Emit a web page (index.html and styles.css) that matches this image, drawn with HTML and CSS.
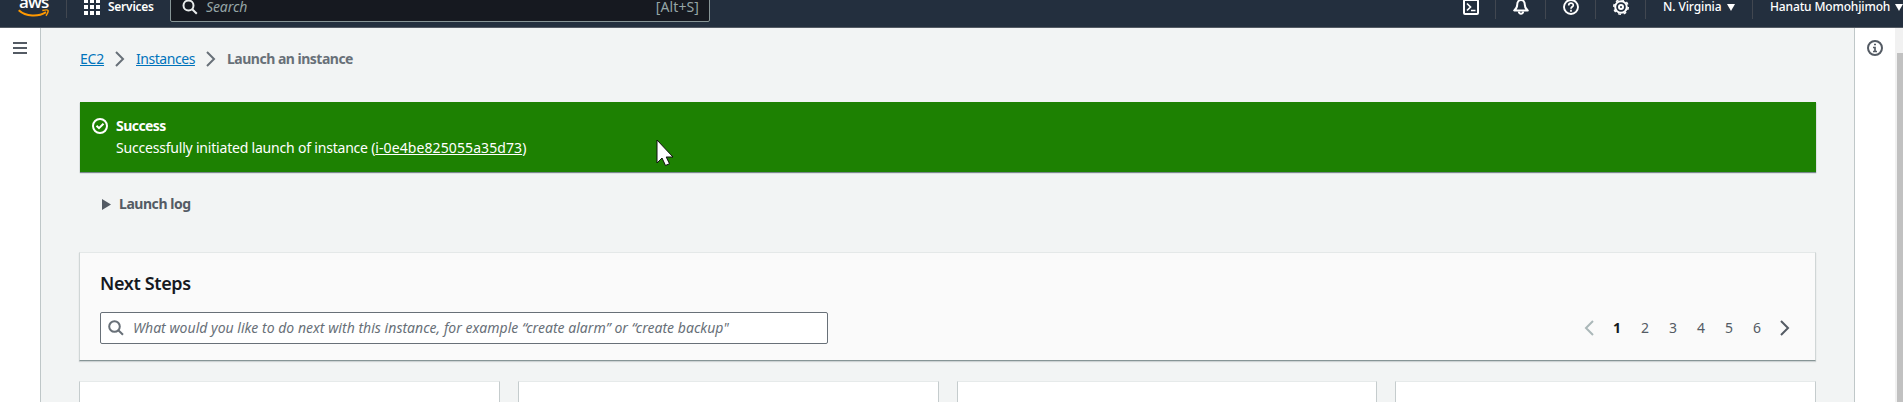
FILE: index.html
```html
<!DOCTYPE html>
<html lang="en">
<head>
<meta charset="utf-8">
<title>Launch an instance | EC2</title>
<link rel="stylesheet" href="styles.css">
</head>
<body>
<header class="topbar">
  <div class="brand">
    <span class="brand-name">aws</span>
    <svg class="smile" width="32" height="9" viewBox="0 0 32 9" fill="none" stroke="#ff9900" stroke-width="2"><path d="M.7 1.200C8 7.700 20 8.300 28 3.200"/><path d="M24.300 1.500c2.800-.7 5.400-.8 5.700 0s-.5 3.300-2 5.300" stroke-width="1.500"/></svg>
  </div>
  <button class="services"><svg width="16" height="16" viewBox="0 0 16 16" fill="#fff"><path d="M0 0h4v4H0zM6 0h4v4H6zM12 0h4v4h-4zM0 6h4v4H0zM6 6h4v4H6zM12 6h4v4h-4zM0 12h4v4H0zM6 12h4v4H6zM12 12h4v4h-4z"/></svg><span>Services</span></button>
  <div class="search">
    <svg width="16" height="16" viewBox="0 0 16 16" fill="none" stroke="#eaeded" stroke-width="2"><circle cx="6.500" cy="6.500" r="5"/><path d="M10.200 10.200l4.600 4.600"/></svg>
    <span class="search-hint">Search</span><span class="shortcut">[Alt+S]</span>
  </div>
  <nav class="tools">
    <span class="tool"><svg width="16" height="16" viewBox="0 0 16 16" fill="none" stroke="#fff" stroke-width="2"><rect x="1" y="1" width="14" height="14" rx="1"/><path d="M4 4.500l3.500 3.500L4 11.500M8 11.500h4.500" stroke-width="1.700"/></svg></span>
    <span class="tool"><svg width="16" height="16" viewBox="0 0 16 16" fill="none" stroke="#fff" stroke-width="2" stroke-linejoin="round"><path d="M1.200 11.500h13.600c-2-1.500-3-3-3-5.700C11.800 3 10.200 1 8 1S4.200 3 4.200 5.800c0 2.700-1 4.200-3 5.700z"/><path d="M5.800 12.500c.3 3 4.100 3 4.400 0"/></svg></span>
    <span class="tool"><svg width="16" height="16" viewBox="0 0 16 16" fill="none" stroke="#fff" stroke-width="1.900"><circle cx="8" cy="8" r="7"/><path d="M5.700 6.400C5.700 3.400 10.300 3.500 10.300 6.200 10.300 7.800 8 7.800 8 9.700M8 10.800v1.900" stroke-width="1.700"/></svg></span>
    <span class="tool"><svg width="16" height="16" viewBox="0 0 16 16" fill="none" stroke="#fff"><circle cx="8" cy="8" r="5.800" stroke-width="2"/><circle cx="8" cy="8" r="7.200" stroke-width="1.600" stroke-dasharray="2.827 2.827"/><circle cx="8" cy="8" r="2" stroke-width="2"/></svg></span>
    <span class="menu region"><span>N. Virginia</span><i class="caret"></i></span>
    <span class="menu account"><span>Hanatu Momohjimoh</span><i class="caret"></i></span>
  </nav>
</header>
<div class="layout">
  <aside class="side left"><svg width="14" height="12" viewBox="0 0 14 12" fill="#545b64"><path d="M0 0h14v2H0zM0 5h14v2H0zM0 10h14v2H0z"/></svg></aside>
  <main class="content">
    <nav class="crumbs">
      <a class="crumb-root" href="#">EC2</a>
      <svg width="10" height="16" viewBox="0 0 10 16" fill="none" stroke="#687078" stroke-width="2"><path d="M1 1l7 7-7 7"/></svg>
      <a class="crumb-list" href="#">Instances</a>
      <svg width="10" height="16" viewBox="0 0 10 16" fill="none" stroke="#687078" stroke-width="2"><path d="M1 1l7 7-7 7"/></svg>
      <span class="current">Launch an instance</span>
    </nav>
    <section class="flash">
      <svg width="16" height="16" viewBox="0 0 16 16" fill="none" stroke="#fff" stroke-width="2"><circle cx="8" cy="8" r="7"/><path d="M4.500 7.700L7 10.200l4.500-4.500"/></svg>
      <div class="flash-text"><div class="flash-title">Success</div><div class="flash-body">Successfully initiated launch of instance (<a href="#">i-0e4be825055a35d73</a>)</div></div>
    </section>
    <div class="log"><svg width="9" height="11" viewBox="0 0 9 11" fill="#545b64"><path d="M0 0l9 5.500L0 11z"/></svg><span>Launch log</span></div>
    <section class="panel">
      <h2>Next Steps</h2>
      <div class="panel-row">
        <div class="filter"><svg width="16" height="16" viewBox="0 0 16 16" fill="none" stroke="#687078" stroke-width="2"><circle cx="6.500" cy="6.500" r="5.300"/><path d="M10.300 10.300l4.700 4.500"/></svg><span>What would you like to do next with this instance, for example “create alarm” or “create backup"</span></div>
        <div class="pages">
          <span><svg width="10" height="16" viewBox="0 0 10 16" fill="none" stroke="#aab7b8" stroke-width="2"><path d="M9 1L2 8l7 7"/></svg></span>
          <span class="active">1</span><span>2</span><span>3</span><span>4</span><span>5</span><span>6</span>
          <span><svg width="10" height="16" viewBox="0 0 10 16" fill="none" stroke="#545b64" stroke-width="2"><path d="M1 1l7 7-7 7"/></svg></span>
        </div>
      </div>
    </section>
    <div class="cards"><article></article><article></article><article></article><article></article></div>
  </main>
  <aside class="side right"><svg width="16" height="16" viewBox="0 0 16 16" fill="none" stroke="#545b64" stroke-width="2"><circle cx="8" cy="8" r="7"/><path d="M7 4.500h2M6 7.500h2v4M6 11.500h4" stroke-width="1.700"/></svg></aside>
  <div class="scrollbar"><div class="thumb"></div></div>
</div>
<svg class="pointer" width="19" height="28" viewBox="0 0 19 28" fill="#fff" stroke="#111"><path d="M1 1v23l5-5 3.500 7.500 4-1.800L10.200 18H17z"/></svg>
</body>
</html>
```
FILE: styles.css
```css
* { box-sizing: border-box; }
body { margin: 0; height: 402px; overflow: hidden; background: #f2f4f4; color: #16191f; font: 14px/22px "Noto Sans", "Open Sans", sans-serif; }
svg { display: block; flex: none; }
span, a { white-space: nowrap; }

.topbar { display: flex; align-items: center; height: 41px; margin-top: -13px; background: #232f3e; border-bottom: 1px solid #545b64; color: #fff; font-size: 12px; }
.brand { width: 67px; height: 23px; padding-left: 18px; border-right: 1px solid #414750; margin-top: -1px; }
.brand-name { display: block; font: 600 17px/18px "Open Sans", sans-serif; letter-spacing: -.8px; margin: -2px 0 0 1px; height: 16px; }
.services { display: flex; align-items: center; gap: 8px; width: 103px; padding: 0 0 0 17px; border: 0; background: none; color: #fff; font: 600 12px/16px "Noto Sans", sans-serif; letter-spacing: -.25px; }
.search { display: flex; align-items: center; width: 540px; height: 30px; padding: 0 10px 0 11px; border: 1px solid #879596; border-radius: 2px; background: #161920; color: #95a5a6; font-size: 14px; }
.search-hint { flex: 1; margin-left: 8px; font-style: italic; letter-spacing: -.1px; }
.shortcut { letter-spacing: .1px; }
.tools { display: flex; align-items: center; margin-left: auto; height: 23px; font-weight: 500; }
.tool { display: flex; align-items: center; justify-content: center; width: 50px; height: 23px; border-right: 1px solid #414750; }
.menu { display: flex; align-items: center; gap: 6px; height: 23px; padding-left: 17px; letter-spacing: -.1px; }
.region { width: 107px; border-right: 1px solid #414750; }
.account { width: 150px; letter-spacing: -.15px; }
.account .caret { margin-left: -1px; }
.caret { flex: none; border: 4px solid transparent; border-top: 7px solid #fff; border-bottom: 0; }

.layout { display: flex; height: 374px; }
.side { display: flex; justify-content: center; align-items: flex-start; width: 41px; background: #fff; }
.left { padding-top: 14px; border-right: 1px solid #bfc7c8; }
.right { padding-top: 12px; border-left: 1px solid #bfc7c8; }
.scrollbar { width: 8px; padding: 25px 0 0 2px; background: #f1f1f1; }
.thumb { height: 349px; background: #c1c1c1; }
.content { flex: 1; min-width: 0; display: flex; flex-direction: column; padding: 20px 38px 0 39px; }

.crumbs { display: flex; align-items: center; height: 22px; color: #687078; }
.crumbs a { color: #0073bb; text-decoration: underline; }
.crumbs svg { margin: 0 11px; }
.crumb-root { width: 24px; letter-spacing: -.2px; }
.crumb-list { width: 59px; letter-spacing: -.45px; }
.current { font-weight: 700; letter-spacing: -.5px; }

.flash { display: flex; gap: 8px; height: 70px; margin-top: 32px; padding: 13px 12px; background: #1d8102; color: #fff; box-shadow: 0 1px 1px rgba(0,28,36,.5); }
.flash svg { margin-top: 3px; }
.flash-title { font-weight: 700; letter-spacing: -.55px; }
.flash-body { letter-spacing: -.2px; }
.flash a { color: #fff; text-decoration: underline; letter-spacing: .1px; }
.log { display: flex; align-items: center; gap: 8px; height: 22px; margin: 21px 0 0 22px; color: #545b64; font-weight: 700; letter-spacing: -.45px; }

.panel { height: 109px; margin: 37px 0 0 -1px; padding: 19px 16px 0 20px; background: #fafafa; border: 1px solid #d0d6d6; border-top-color: #e4e8e8; border-bottom-color: #879596; box-shadow: 0 1px 1px rgba(0,28,36,.15); }
.panel h2 { margin: 0; font-size: 18px; line-height: 22px; font-weight: 600; letter-spacing: -.36px; }
.panel-row { display: flex; justify-content: space-between; align-items: center; margin-top: 18px; }
.filter { display: flex; align-items: center; gap: 9px; width: 728px; height: 32px; padding: 0 7px; border: 1px solid #687078; border-radius: 2px; background: #fff; color: #687078; font-style: italic; letter-spacing: .025px; }
.pages { display: flex; color: #545b64; }
.pages span { display: flex; justify-content: center; align-items: center; width: 28px; }
.pages .active { color: #16191f; font-weight: 700; }
.cards { flex: 1; display: grid; grid-template-columns: repeat(4, 1fr); gap: 18px; margin: 20px 0 0 -1px; }
.cards article { background: #fff; border: 1px solid #c5cccd; border-top-color: #e6eaea; border-bottom: 0; }
.pointer { position: absolute; left: 656px; top: 139px; }
```
